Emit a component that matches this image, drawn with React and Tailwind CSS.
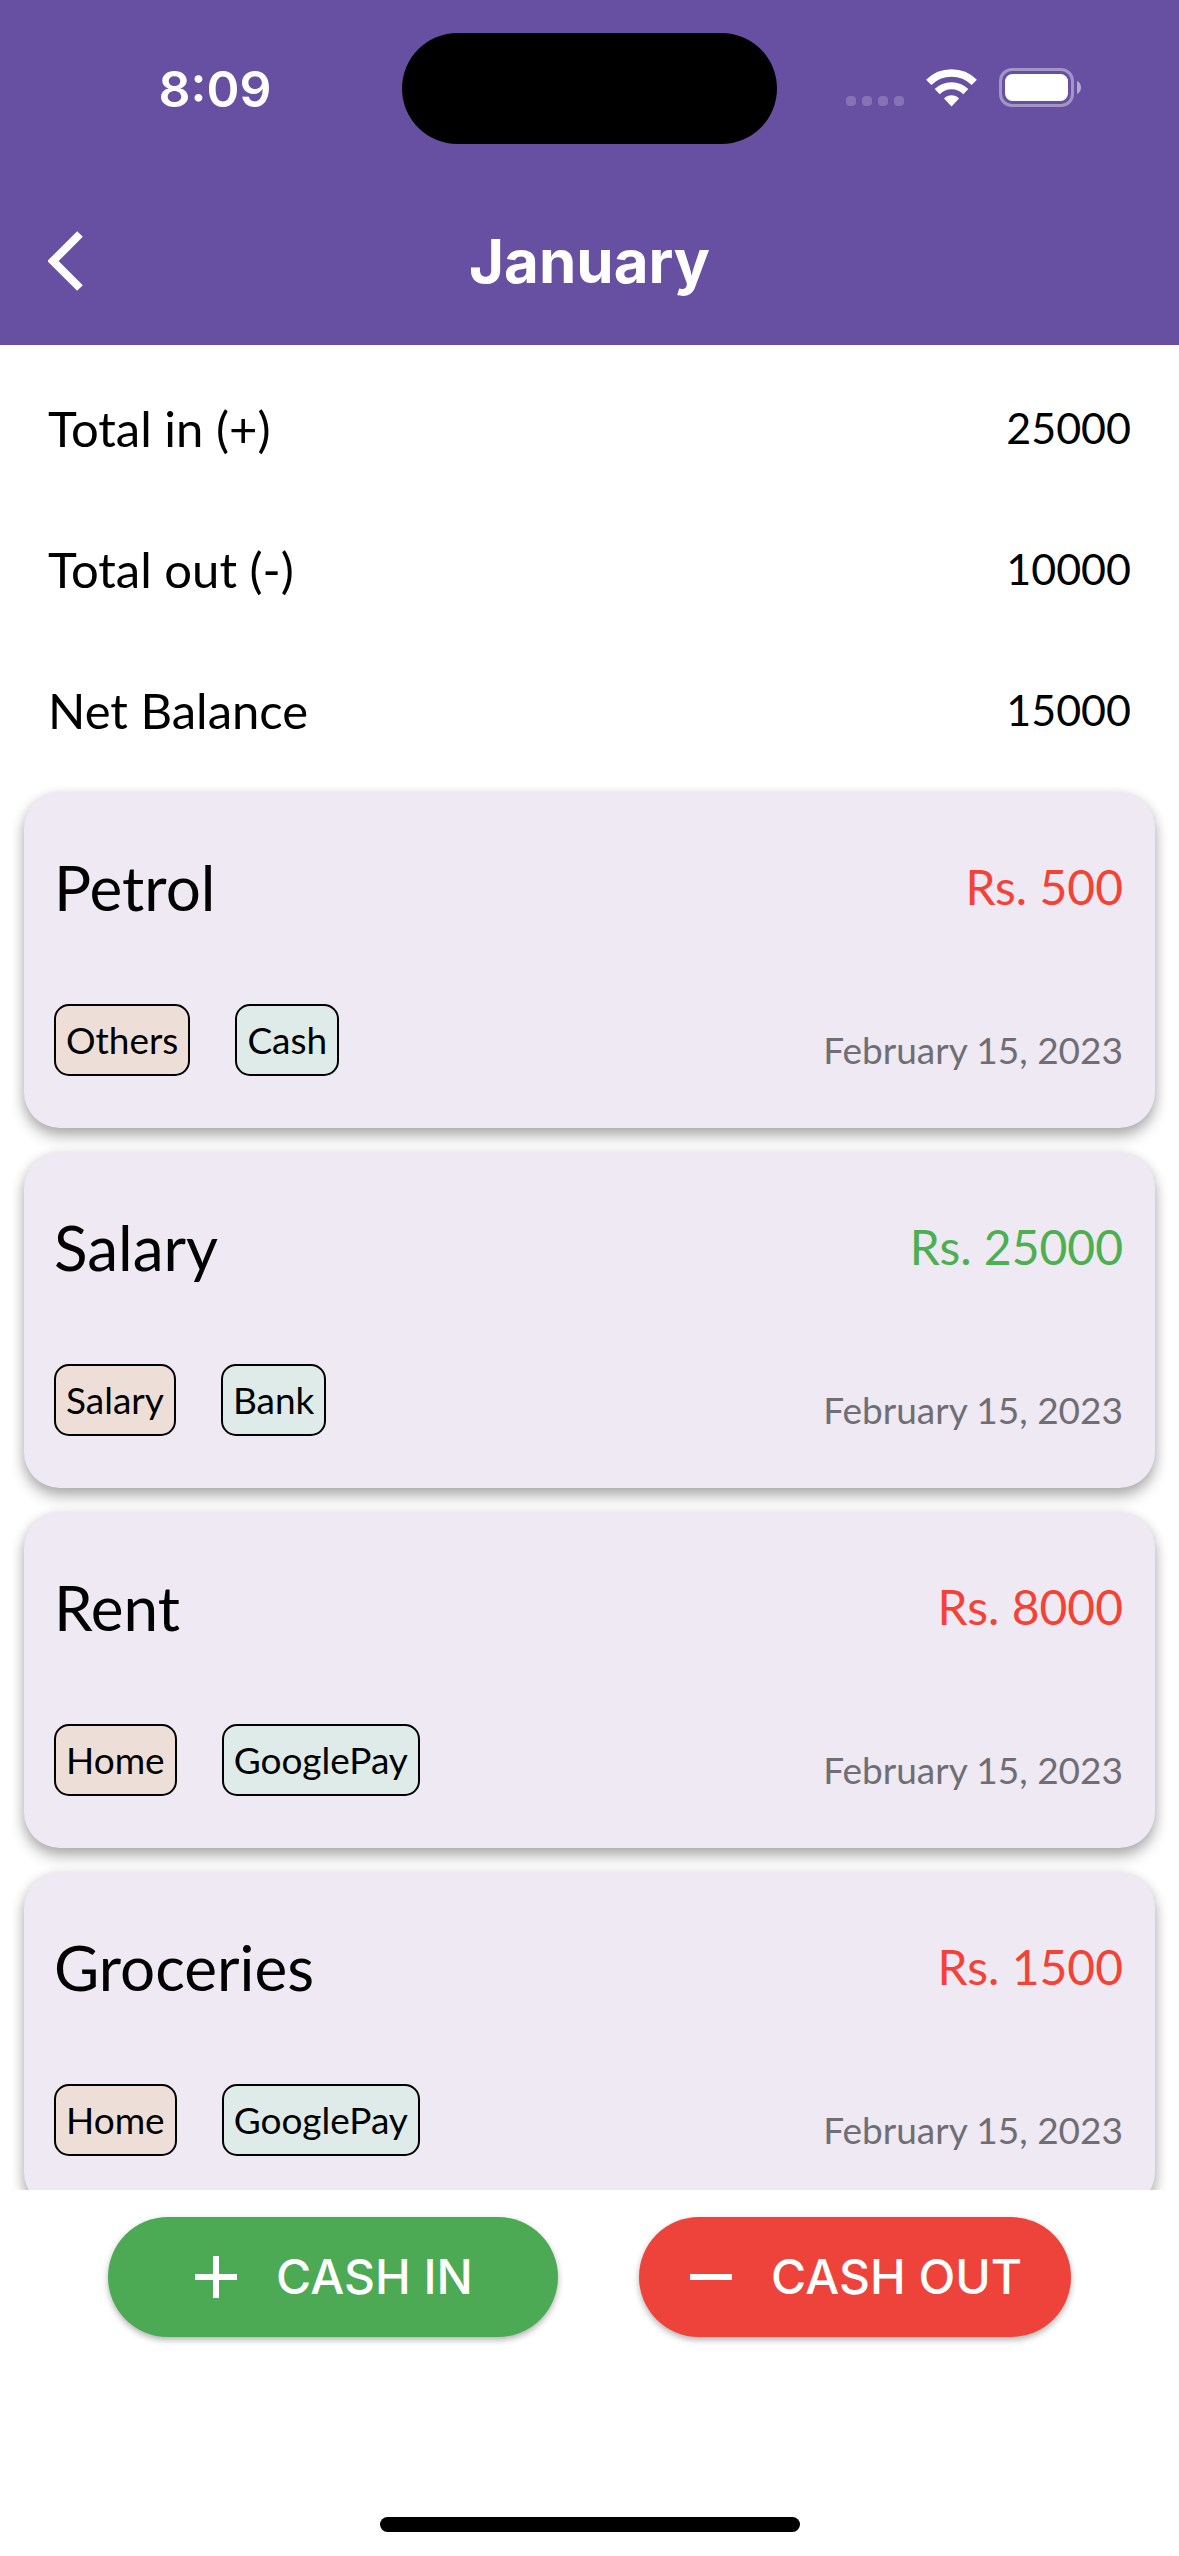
const totals = [
  { label: "Total in (+)", value: "25000" },
  { label: "Total out (-)", value: "10000" },
  { label: "Net Balance", value: "15000" },
];

const entries = [
  { title: "Petrol", amount: "Rs. 500", income: false, category: "Others", method: "Cash", date: "February 15, 2023" },
  { title: "Salary", amount: "Rs. 25000", income: true, category: "Salary", method: "Bank", date: "February 15, 2023" },
  { title: "Rent", amount: "Rs. 8000", income: false, category: "Home", method: "GooglePay", date: "February 15, 2023" },
  { title: "Groceries", amount: "Rs. 1500", income: false, category: "Home", method: "GooglePay", date: "February 15, 2023" },
];

function WifiIcon() {
  return (
    <svg width="51" height="38" viewBox="0 0 51 38" fill="none" aria-label="Wi-Fi">
      <path d="M2.7 13.4A32.4 32.4 0 0 1 48.3 13.4" stroke="#fff" strokeWidth="7.4" />
      <path d="M11.2 22.6A20.4 20.4 0 0 1 39.8 22.6" stroke="#fff" strokeWidth="7.2" />
      <path d="M18 29.6C22 25.2 29 25.2 33 29.6L25.5 37.4Z" fill="#fff" />
    </svg>
  );
}

function BatteryIcon() {
  return (
    <svg width="82" height="39" viewBox="0 0 82 39" fill="none" aria-label="Battery full">
      <rect x="1.5" y="1.5" width="72" height="36" rx="11.5" stroke="#fff" strokeOpacity="0.4" strokeWidth="3" />
      <rect x="6" y="6" width="63" height="27" rx="7.5" fill="#fff" />
      <path d="M78 13C80.6 14 82 16.6 82 19.5S80.6 25 78 26Z" fill="#fff" fillOpacity="0.5" />
    </svg>
  );
}

function StatusBar() {
  return (
    <div className="grid grid-cols-[1fr_375px_1fr] items-center pt-[33px]">
      <time className="pl-7 text-center text-[50px] leading-[60px] font-semibold">8:09</time>
      <div className="h-[111px] rounded-full bg-black" />
      <div className="flex items-center justify-end gap-[22px] pr-[98px] pb-0.5">
        <div className="flex gap-1.5 self-end pb-px">
          <span className="size-2.5 rounded-[4px] bg-white/20" />
          <span className="size-2.5 rounded-[4px] bg-white/20" />
          <span className="size-2.5 rounded-[4px] bg-white/20" />
          <span className="size-2.5 rounded-[4px] bg-white/20" />
        </div>
        <WifiIcon />
        <BatteryIcon />
      </div>
    </div>
  );
}

function Entry({ entry }) {
  return (
    <li className="mx-3 mt-3 mb-6 flex h-[336px] flex-col justify-between rounded-[36px] bg-[#eee9f3] pt-[60px] pr-8 pb-[52px] pl-[30px] shadow-[0_9px_15px_rgba(0,0,0,0.24),0_3px_12px_rgba(0,0,0,0.16)]">
      <div className="flex items-center justify-between">
        <h2 className="text-[62px] leading-[70px]">{entry.title}</h2>
        <p className={entry.income ? "text-[48px] leading-[60px] text-[#4caf50]" : "text-[48px] leading-[60px] text-[#f44336]"}>
          {entry.amount}
        </p>
      </div>
      <div className="flex items-end justify-between">
        <div className="flex gap-[45px] text-[37px] leading-[44px]">
          <span className="rounded-[15px] border-2 border-black bg-[#eddfd8] px-2.5 py-3">{entry.category}</span>
          <span className="rounded-[15px] border-2 border-black bg-[#dfebe8] px-2.5 py-3">{entry.method}</span>
        </div>
        <time className="pb-1 text-[37px] leading-[44px] text-[#706e74]">{entry.date}</time>
      </div>
    </li>
  );
}

export default function App() {
  return (
    <div className="flex h-screen flex-col bg-white font-['Lato',sans-serif] text-black">
      <header className="bg-[#6750a2] font-['Inter',sans-serif] text-white">
        <StatusBar />
        <div className="grid grid-cols-[1fr_auto_1fr] items-center px-[48px] pt-[57px] pb-6">
          <button type="button" aria-label="Back" className="justify-self-start">
            <svg width="36" height="60" viewBox="0 0 36 60" fill="none" aria-hidden="true">
              <path d="M32 3L5 30L32 57" stroke="#fff" strokeWidth="8" />
            </svg>
          </button>
          <h1 className="text-[60px] leading-[120px] font-bold">January</h1>
        </div>
      </header>

      <dl className="px-[48px] pt-3">
        {totals.map((row) => (
          <div key={row.label} className="flex h-[141px] items-center justify-between">
            <dt className="text-[49px] leading-[60px]">{row.label}</dt>
            <dd className="text-[43px] leading-[60px]">{row.value}</dd>
          </div>
        ))}
      </dl>

      <ul className="mx-3 min-h-0 flex-1 overflow-y-auto [scrollbar-width:none]">
        {entries.map((entry) => (
          <Entry key={entry.title} entry={entry} />
        ))}
      </ul>

      <footer className="flex flex-col items-center pt-[27px] pb-6 font-['Inter',sans-serif]">
        <div className="flex gap-[81px] text-[48px] leading-[60px] font-medium text-white">
          <button type="button" className="flex h-[120px] min-w-[450px] items-center gap-6 rounded-full bg-[#4caa55] pr-[72px] pl-[72px] shadow-[0_3px_6px_rgba(0,0,0,0.3)]">
            <svg width="72" height="72" viewBox="0 0 24 24" fill="#fff" aria-hidden="true">
              <path d="M19 13h-6v6h-2v-6H5v-2h6V5h2v6h6v2z" />
            </svg>
            CASH IN
          </button>
          <button type="button" className="flex h-[120px] min-w-[432px] items-center gap-6 rounded-full bg-[#ee433b] pr-9 pl-9 shadow-[0_3px_6px_rgba(0,0,0,0.3)]">
            <svg width="72" height="72" viewBox="0 0 24 24" fill="#fff" aria-hidden="true">
              <path d="M19 13H5v-2h14v2z" />
            </svg>
            CASH OUT
          </button>
        </div>
        <div className="mt-[180px] h-[15px] w-[420px] rounded-full bg-black" />
      </footer>
    </div>
  );
}
